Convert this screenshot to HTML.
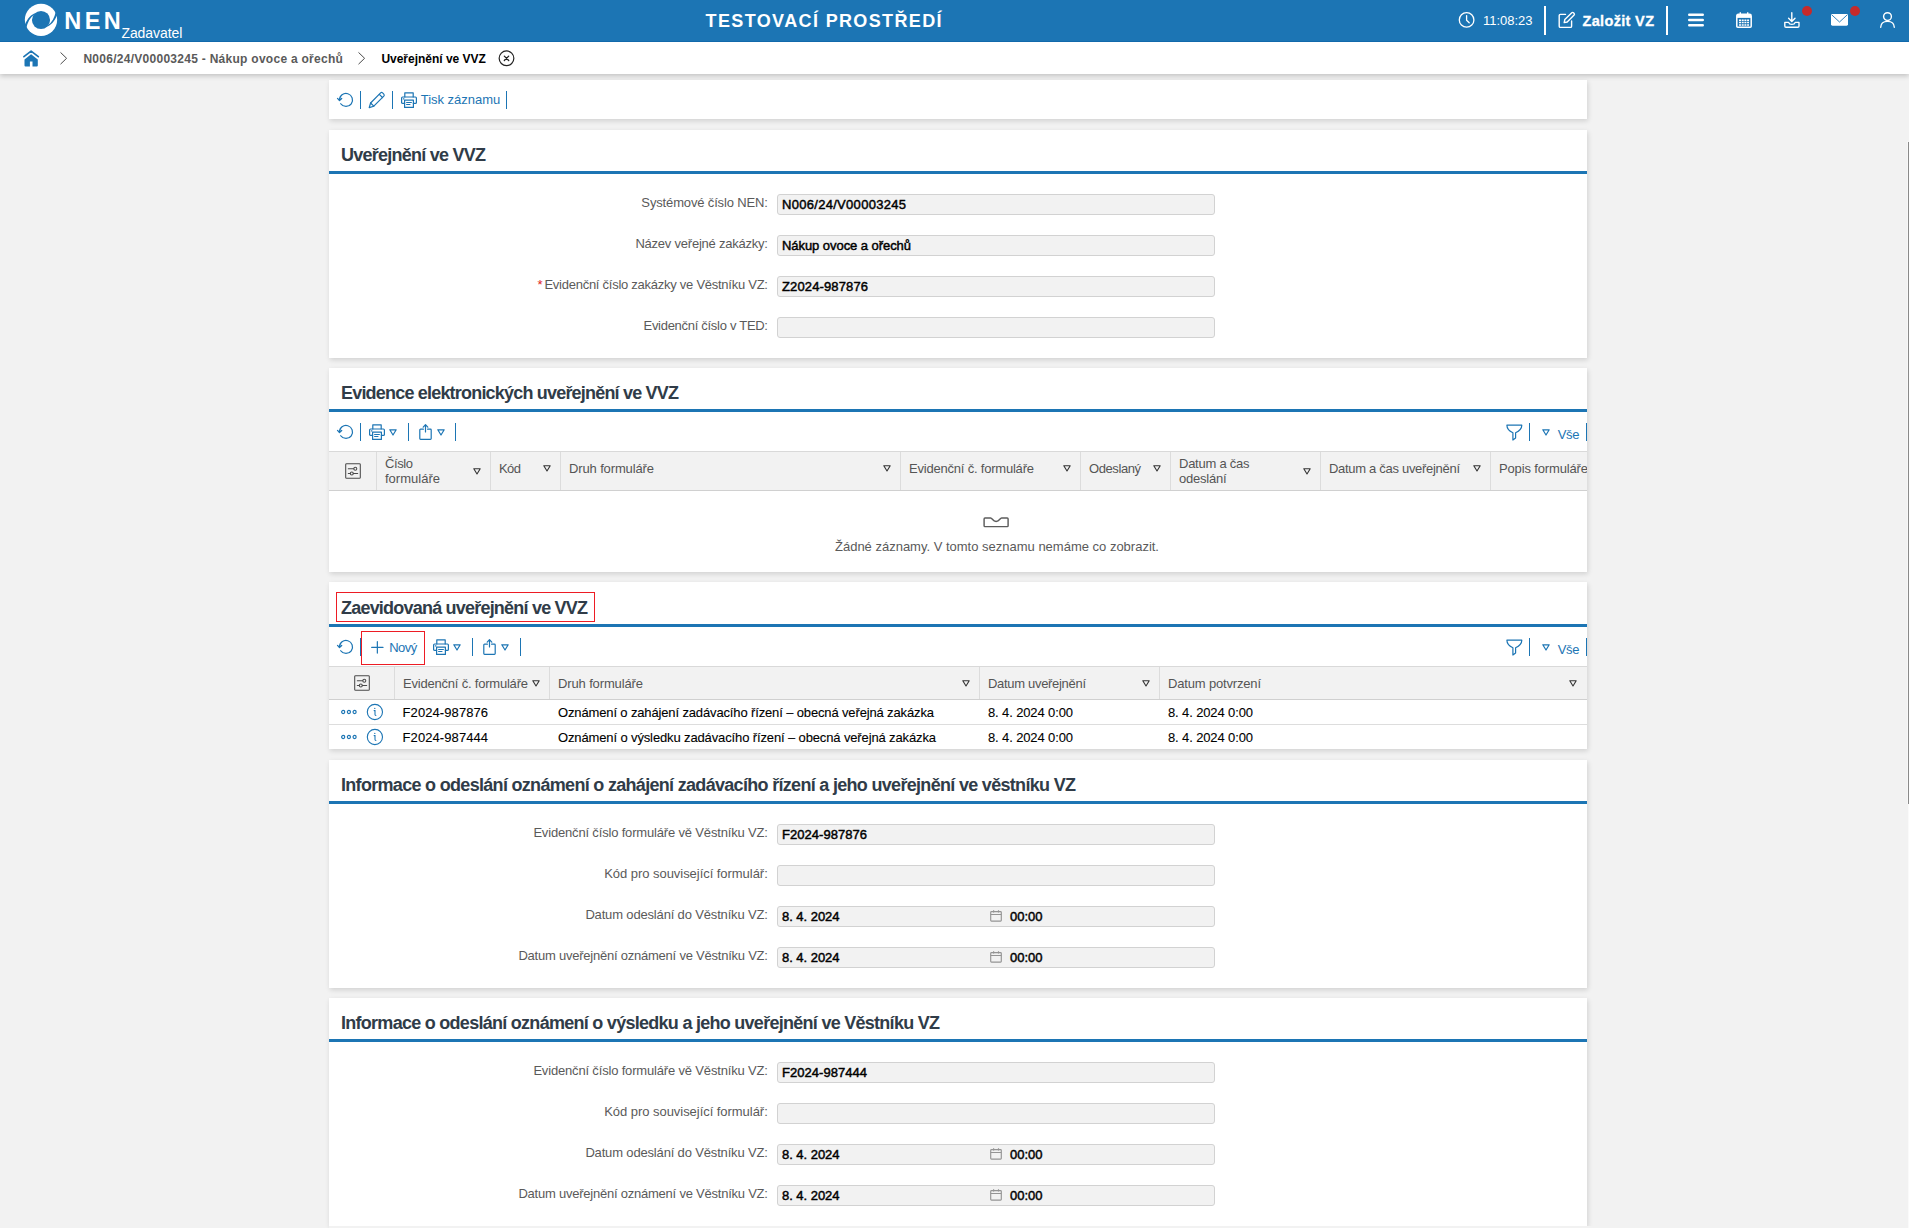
<!DOCTYPE html>
<html lang="cs"><head><meta charset="utf-8"><title>NEN - Uveřejnění ve VVZ</title>
<style>
*{box-sizing:border-box;margin:0;padding:0}
html,body{width:1909px;height:1228px;overflow:hidden;background:#f2f2f2}
body{position:relative;font-family:"Liberation Sans",sans-serif;font-size:13px;color:#000}
.a{position:absolute;white-space:nowrap;line-height:1}
svg{position:absolute;overflow:visible}
#hdr{position:absolute;left:0;top:0;width:1909px;height:41.5px;background:#1c75b4;color:#fff;z-index:2;box-shadow:inset 0 -1px 0 #1169ab}
#bc{position:absolute;left:0;top:41.5px;width:1909px;height:32.5px;background:#fff;box-shadow:0 2px 5px rgba(0,0,0,.2)}
.card{position:absolute;left:329px;width:1258px;background:#fff;box-shadow:1px 2px 5px rgba(0,0,0,.14);overflow:hidden}
.ttl{position:absolute;left:12px;top:15px;font-size:18px;font-weight:bold;color:#303c48;white-space:nowrap;line-height:20px}
.bl{position:absolute;left:0;top:41px;width:100%;height:3px;background:#1c75b4}
.lbl{position:absolute;right:819.3px;color:#5a5a5a;white-space:nowrap;line-height:16px;font-size:13px}
.inp{position:absolute;left:448px;width:438px;height:21px;border:1px solid #d2d2d2;border-radius:3px;background:#f2f2f2}
.val{position:absolute;left:453px;font-weight:normal;-webkit-text-stroke:0.45px #000;white-space:nowrap;line-height:16px;font-size:13px}
.sep{position:absolute;width:1.3px;height:18px;background:#1c75b4}
.blue{color:#1c75b4}
.th{position:absolute;left:0;width:1334px;background:#f2f2f2;border-top:1px solid #d9d9d9;border-bottom:1px solid #d0d0d0}
.vs{position:absolute;top:0;width:1px;height:100%;background:#dcdcdc}
.ht{position:absolute;color:#555;white-space:nowrap;line-height:15px;font-size:13px}
.td{position:absolute;white-space:nowrap;line-height:16px;font-size:13px;color:#000;-webkit-text-stroke:0.1px #000}
</style></head><body>

<div id="hdr">
<svg style="left:0;top:0" width="80" height="42" viewBox="0 0 80 42">
<circle cx="41" cy="19.85" r="16.15" fill="#fff"></circle>
<circle cx="41" cy="20" r="9.05" fill="#1c75b4"></circle>
<path d="M34.3,13.4 C29.6,15.6 26.2,20.4 24.2,26.6 L26.2,28.4 C27.4,22.4 30,17.4 34.6,14.2 Z" fill="#1c75b4"></path>
<path d="M34.3,13.4 C29.6,15.6 26.2,20.4 24.2,26.6 L26.2,28.4 C27.4,22.4 30,17.4 34.6,14.2 Z" fill="#1c75b4" transform="rotate(180 41 19.9)"></path>
</svg>
<span class="a" style="left: 64.3px; top: 9px; font-size: 23.5px; font-weight: bold; line-height: 24px; letter-spacing: 3.438px;">NEN</span>
<span class="a" style="left: 121.4px; top: 25.3px; font-size: 14px; line-height: 16px; letter-spacing: -0.061px;">Zadavatel</span>
<span class="a" style="left: 705.6px; top: 10.7px; font-size: 18px; font-weight: bold; line-height: 20px; letter-spacing: 1.369px;">TESTOVACÍ PROSTŘEDÍ</span>
<svg style="left:1458px;top:11px" width="18" height="18" viewBox="0 0 18 18" fill="none" stroke="#fff" stroke-width="1.3" stroke-linecap="round" stroke-linejoin="round"><circle cx="8.6" cy="8.9" r="7.3"></circle><path d="M8.6,4.6 V9.2 L11.2,11.8"></path></svg>
<span class="a" style="left: 1483px; top: 13px; font-size: 13px; line-height: 16px; letter-spacing: -0.034px;">11:08:23</span>
<div class="a" style="left:1544px;top:6px;width:2px;height:29px;background:#fff"></div>
<svg style="left:1557px;top:11px" width="20" height="18" viewBox="0 0 20 18" fill="none" stroke="#fff" stroke-width="1.4" stroke-linecap="round" stroke-linejoin="round"><path d="M8.5,3.4 H3.4 Q2.2,3.4 2.2,4.6 V15.2 Q2.2,16.4 3.4,16.4 H13.4 Q14.6,16.4 14.6,15.2 V10"></path><path d="M7.2,11.6 L7.8,8.6 L14.8,1.7 Q15.6,1 16.5,1.8 L17.1,2.4 Q17.8,3.2 17.1,4 L10.2,11 Z"></path></svg>
<span class="a" style="left: 1582.5px; top: 12px; font-size: 14.5px; font-weight: bold; line-height: 18px; -webkit-text-stroke: 0.3px rgb(255, 255, 255); letter-spacing: 0.335px;">Založit VZ</span>
<div class="a" style="left:1666px;top:6px;width:2px;height:29px;background:#fff"></div>
<svg style="left:1688px;top:12px" width="16" height="16" viewBox="0 0 16 16" stroke="#fff" stroke-width="2.6" stroke-linecap="round"><path d="M1.3,2.8 H14.7 M1.3,8 H14.7 M1.3,13.3 H14.7"></path></svg>
<svg style="left:1736px;top:12px" width="16" height="16" viewBox="0 0 16 16" fill="none" stroke="#fff"><path d="M0.8,4 Q0.8,2.3 2.4,2.3 H13.6 Q15.2,2.3 15.2,4 V14.2 Q15.2,15.2 14.2,15.2 H1.8 Q0.8,15.2 0.8,14.2 Z" stroke-width="1.5"></path><path d="M1,4.2 H15" stroke-width="3.4"></path><path d="M4.3,0.3 V3.2 M11.7,0.3 V3.2" stroke-width="1.4"></path><path d="M3,8.2 H13 M3,10.6 H13 M3,13 H13" stroke-width="1.5" stroke-dasharray="2 0.7"></path></svg>
<svg style="left:1784px;top:12px" width="16" height="16" viewBox="0 0 16 16" fill="none" stroke="#fff" stroke-width="1.4" stroke-linecap="round" stroke-linejoin="round"><path d="M7.8,0.7 V9.3 M4.6,6.3 L7.8,9.5 L11,6.3"></path><path d="M0.8,10.4 V14 Q0.8,15.2 2,15.2 H13.8 Q15,15.2 15,14 V10.4 H11.2 Q10.6,12.4 7.9,12.4 Q5.2,12.4 4.6,10.4 Z"></path></svg>
<div class="a" style="left:1802px;top:5.8px;width:10px;height:10px;border-radius:50%;background:#c62a2b"></div>
<svg style="left:1831px;top:14px" width="17" height="12" viewBox="0 0 17 12"><rect x="0" y="0" width="17" height="11.7" rx="1.4" fill="#fff"></rect><path d="M0.8,0.9 L8.5,8 L16.2,0.9" fill="none" stroke="#1c75b4" stroke-width="0.9"></path></svg>
<div class="a" style="left:1850px;top:5.8px;width:10px;height:10px;border-radius:50%;background:#c62a2b"></div>
<svg style="left:1880px;top:12px" width="16" height="16" viewBox="0 0 16 16" fill="none" stroke="#fff" stroke-width="1.4" stroke-linecap="round"><circle cx="7.5" cy="4.6" r="3.9"></circle><path d="M0.7,15.3 Q0.9,9.4 7.5,9.4 Q14.1,9.4 14.3,15.3"></path></svg>
</div>
<div id="bc"></div>
<svg style="left:23px;top:49.5px" width="16" height="16" viewBox="0 0 16 16"><path d="M0.9,6.7 L8.1,1.1 L15.3,6.7" fill="none" stroke="#1c75b4" stroke-width="1.7" stroke-linecap="round" stroke-linejoin="round"></path><path d="M8.1,4.3 L14.8,9.5 V15.4 Q14.8,16.4 13.8,16.4 H9.5 V11.4 H6.9 V16.4 H2.5 Q1.5,16.4 1.5,15.4 V9.5 Z" fill="#1c75b4"></path></svg>
<svg style="left:60px;top:52px" width="8" height="13" viewBox="0 0 8 13" fill="none" stroke="#4a4a4a" stroke-width="1" stroke-linecap="round" stroke-linejoin="round"><path d="M0.8,0.7 L6.6,6.3 L0.8,11.9"></path></svg>
<span class="a" style="left: 83.4px; top: 51.8px; font-size: 12px; font-weight: bold; color: rgb(90, 90, 90); line-height: 14px; letter-spacing: 0.274px;">N006/24/V00003245 - Nákup ovoce a ořechů</span>
<svg style="left:358px;top:52px" width="8" height="13" viewBox="0 0 8 13" fill="none" stroke="#4a4a4a" stroke-width="1" stroke-linecap="round" stroke-linejoin="round"><path d="M0.8,0.7 L6.6,6.3 L0.8,11.9"></path></svg>
<span class="a" style="left: 381.4px; top: 51.8px; font-size: 12px; font-weight: bold; color: rgb(0, 0, 0); line-height: 14px; letter-spacing: -0.014px;">Uveřejnění ve VVZ</span>
<svg style="left:498px;top:49.5px" width="17" height="17" viewBox="0 0 17 17" fill="none" stroke="#222" stroke-width="1.2" stroke-linecap="round"><circle cx="8.5" cy="8.3" r="7.35"></circle><path d="M6.3,6.1 L10.7,10.5 M10.7,6.1 L6.3,10.5" stroke-width="1.3"></path></svg>

<div class="card" id="c1" style="top:80px;height:39px">
<svg style="left:7.5px;top:11px" width="18" height="18" viewBox="0 0 18 18" fill="none" stroke="#1c75b4" stroke-width="1.25" stroke-linecap="round" stroke-linejoin="round"><path d="M2.5,9.2 A6.5,6.5 0 1 1 3.7,12.75"></path><path d="M0.5,7.4 L2.5,9.5 L4.7,7.5"></path></svg>
<div class="sep" style="left:30.55px;top:11px"></div>
<svg style="left:39px;top:11px" width="18" height="18" viewBox="0 0 18 18" fill="none" stroke="#1c75b4" stroke-width="1.2" stroke-linejoin="round" stroke-linecap="round"><path d="M1.2,16.6 L2.6,12 L12.6,1.9 Q13.6,1 14.6,1.9 L15.8,3.1 Q16.7,4.1 15.8,5.1 L5.8,15.2 Z"></path><path d="M11.3,3.3 L14.5,6.5 M2.6,12 L5.8,15.2"></path></svg>
<div class="sep" style="left:62.550000000000004px;top:11px"></div>
<svg style="left:72px;top:12px" width="16" height="16" viewBox="0 0 16 16" fill="none" stroke="#1c75b4" stroke-width="1.2" stroke-linejoin="round" stroke-linecap="round"><path d="M3.8,5 V0.8 H12.2 V5"></path><path d="M3.6,11.4 H1.6 Q0.6,11.4 0.6,10.4 V6 Q0.6,5 1.6,5 H14.4 Q15.4,5 15.4,6 V10.4 Q15.4,11.4 14.4,11.4 H12.4"></path><path d="M3.6,8.2 H12.4 V15.4 H3.6 Z"></path><path d="M5.6,10.5 H10.4 M5.6,12.5 H9" stroke-width="1.1"></path><path d="M2.4,6.9 H2.9" stroke-width="1.2"></path></svg>
<span class="a blue" style="left: 91.7px; top: 12px; font-size: 13px; line-height: 16px; letter-spacing: -0.02px;">Tisk záznamu</span>
<div class="sep" style="left:176.95px;top:11px"></div>
</div>
<div class="card" id="c2" style="top:130px;height:228px">
<div class="ttl" style="letter-spacing: -0.755px;">Uveřejnění ve VVZ</div><div class="bl"></div>
<div class="lbl" style="top:65px"><span style="display: inline-block; letter-spacing: -0.149px;">Systémové číslo NEN:</span></div>
<div class="inp" style="top:64px"></div>
<span class="val" style="top: 67px; letter-spacing: 0.295px;">N006/24/V00003245</span>
<div class="lbl" style="top:106px"><span style="display: inline-block; letter-spacing: -0.228px;">Název veřejné zakázky:</span></div>
<div class="inp" style="top:105px"></div>
<span class="val" style="top: 108px; letter-spacing: -0.058px;">Nákup ovoce a ořechů</span>
<div class="lbl" style="top:147px"><span style="color:#d22;margin-right:2px">*</span><span style="display: inline-block; letter-spacing: -0.26px;">Evidenční číslo zakázky ve Věstníku VZ:</span></div>
<div class="inp" style="top:146px"></div>
<span class="val" style="top: 149px; letter-spacing: 0.129px;">Z2024-987876</span>
<div class="lbl" style="top:188px"><span style="display: inline-block; letter-spacing: -0.288px;">Evidenční číslo v TED:</span></div>
<div class="inp" style="top:187px"></div>
</div>
<div class="card" id="c3" style="top:368px;height:204px">
<div class="ttl" style="letter-spacing: -0.804px;">Evidence elektronických uveřejnění ve VVZ</div><div class="bl"></div>
<svg style="left:7.5px;top:55px" width="18" height="18" viewBox="0 0 18 18" fill="none" stroke="#1c75b4" stroke-width="1.25" stroke-linecap="round" stroke-linejoin="round"><path d="M2.5,9.2 A6.5,6.5 0 1 1 3.7,12.75"></path><path d="M0.5,7.4 L2.5,9.5 L4.7,7.5"></path></svg>
<div class="sep" style="left:30.75px;top:55px"></div>
<svg style="left:40px;top:56px" width="16" height="16" viewBox="0 0 16 16" fill="none" stroke="#1c75b4" stroke-width="1.2" stroke-linejoin="round" stroke-linecap="round"><path d="M3.8,5 V0.8 H12.2 V5"></path><path d="M3.6,11.4 H1.6 Q0.6,11.4 0.6,10.4 V6 Q0.6,5 1.6,5 H14.4 Q15.4,5 15.4,6 V10.4 Q15.4,11.4 14.4,11.4 H12.4"></path><path d="M3.6,8.2 H12.4 V15.4 H3.6 Z"></path><path d="M5.6,10.5 H10.4 M5.6,12.5 H9" stroke-width="1.1"></path><path d="M2.4,6.9 H2.9" stroke-width="1.2"></path></svg>
<svg style="left:60.2px;top:60.5px" width="8" height="7" viewBox="0 0 8 7" fill="none" stroke="#1c75b4" stroke-width="1.2" stroke-linejoin="round"><path d="M0.8,0.8 H7.2 L4,6 Z"></path></svg>
<div class="sep" style="left:78.75px;top:55px"></div>
<svg style="left:90px;top:56px" width="14" height="16" viewBox="0 0 14 16" fill="none" stroke="#1c75b4" stroke-width="1.2" stroke-linejoin="round" stroke-linecap="round"><path d="M4.4,5.2 H1.6 Q0.8,5.2 0.8,6 V14.6 Q0.8,15.4 1.6,15.4 H11.4 Q12.2,15.4 12.2,14.6 V6 Q12.2,5.2 11.4,5.2 H8.6"></path><path d="M6.5,0.8 V8 M4.2,3.2 L6.5,0.7 L8.8,3.2"></path></svg>
<svg style="left:108px;top:60.5px" width="8" height="7" viewBox="0 0 8 7" fill="none" stroke="#1c75b4" stroke-width="1.2" stroke-linejoin="round"><path d="M0.8,0.8 H7.2 L4,6 Z"></path></svg>
<div class="sep" style="left:125.94999999999999px;top:55px"></div>
<svg style="left:1176.5px;top:55.5px" width="16" height="17" viewBox="0 0 16 17" fill="none" stroke="#1c75b4" stroke-width="1.2" stroke-linejoin="round" stroke-linecap="round"><path d="M0.9,1.2 H15.8 C15.8,5.2 12.4,7.4 9.6,8.8 V14 L6.9,16 V8.8 C4.1,7.4 0.9,5.2 0.9,1.2 Z"></path></svg>
<div class="sep" style="left:1200.05px;top:55px"></div>
<svg style="left:1212.8px;top:60.5px" width="8" height="7" viewBox="0 0 8 7" fill="none" stroke="#1c75b4" stroke-width="1.2" stroke-linejoin="round"><path d="M0.8,0.8 H7.2 L4,6 Z"></path></svg>
<span class="a blue" style="left: 1228.7px; top: 59px; font-size: 13px; line-height: 16px; letter-spacing: -0.303px;">Vše</span>
<div class="sep" style="left:1256.75px;top:55px"></div>
<div class="th" style="top:83px;height:40px;width:1334px">
<div class="vs" style="left:47px"></div>
<span class="ht" style="left: 56px; top: 4px; letter-spacing: -0.406px;">Číslo</span>
<span class="ht" style="left: 56px; top: 19px; letter-spacing: 0.01px;">formuláře</span>
<svg style="left:144px;top:15.7px" width="8" height="7" viewBox="0 0 8 7" fill="none" stroke="#333" stroke-width="1.1" stroke-linejoin="round"><path d="M0.8,0.8 H7.2 L4,6 Z"></path></svg>
<div class="vs" style="left:161px"></div>
<span class="ht" style="left: 170px; top: 8.5px; letter-spacing: -0.57px;">Kód</span>
<svg style="left:214px;top:12.5px" width="8" height="7" viewBox="0 0 8 7" fill="none" stroke="#333" stroke-width="1.1" stroke-linejoin="round"><path d="M0.8,0.8 H7.2 L4,6 Z"></path></svg>
<div class="vs" style="left:231px"></div>
<span class="ht" style="left: 240px; top: 8.5px; letter-spacing: -0.131px;">Druh formuláře</span>
<svg style="left:554px;top:12.5px" width="8" height="7" viewBox="0 0 8 7" fill="none" stroke="#333" stroke-width="1.1" stroke-linejoin="round"><path d="M0.8,0.8 H7.2 L4,6 Z"></path></svg>
<div class="vs" style="left:571px"></div>
<span class="ht" style="left: 580px; top: 8.5px; letter-spacing: -0.207px;">Evidenční č. formuláře</span>
<svg style="left:734px;top:12.5px" width="8" height="7" viewBox="0 0 8 7" fill="none" stroke="#333" stroke-width="1.1" stroke-linejoin="round"><path d="M0.8,0.8 H7.2 L4,6 Z"></path></svg>
<div class="vs" style="left:751px"></div>
<span class="ht" style="left: 760px; top: 8.5px; letter-spacing: -0.417px;">Odeslaný</span>
<svg style="left:824px;top:12.5px" width="8" height="7" viewBox="0 0 8 7" fill="none" stroke="#333" stroke-width="1.1" stroke-linejoin="round"><path d="M0.8,0.8 H7.2 L4,6 Z"></path></svg>
<div class="vs" style="left:841px"></div>
<span class="ht" style="left: 850px; top: 4px; letter-spacing: -0.248px;">Datum a čas</span>
<span class="ht" style="left: 850px; top: 19px; letter-spacing: -0.237px;">odeslání</span>
<svg style="left:974.3px;top:15.7px" width="8" height="7" viewBox="0 0 8 7" fill="none" stroke="#333" stroke-width="1.1" stroke-linejoin="round"><path d="M0.8,0.8 H7.2 L4,6 Z"></path></svg>
<div class="vs" style="left:991px"></div>
<span class="ht" style="left: 1000px; top: 8.5px; letter-spacing: -0.3px;">Datum a čas uveřejnění</span>
<svg style="left:1144px;top:12.5px" width="8" height="7" viewBox="0 0 8 7" fill="none" stroke="#333" stroke-width="1.1" stroke-linejoin="round"><path d="M0.8,0.8 H7.2 L4,6 Z"></path></svg>
<div class="vs" style="left:1161px"></div>
<span class="ht" style="left: 1170px; top: 8.5px; letter-spacing: -0.146px;">Popis formuláře</span>
</div>
<svg style="left:16px;top:95px" width="16" height="16" viewBox="0 0 16 16" fill="none" stroke="#4a4a4a" stroke-width="1.05" stroke-linecap="round"><rect x="0.7" y="0.7" width="14.6" height="14.6" rx="0.9"></rect><path d="M3.3,5.7 H8.7 M3.3,10.4 H5.3 M8.3,10.4 H12.7"></path><circle cx="10.3" cy="5.7" r="1.5"></circle><circle cx="6.8" cy="10.4" r="1.5"></circle></svg>
<svg style="left:654px;top:147.7px" width="26" height="12" viewBox="0 0 26 12" fill="none" stroke="#5c5c5c" stroke-width="1.45" stroke-linejoin="round"><path d="M2,2 H7.6 C9.4,2 9.6,5.4 13.1,5.4 C16.6,5.4 16.8,2 18.6,2 H24.2 Q25.1,2 25.1,2.9 V9.7 Q25.1,10.6 24.2,10.6 H2 Q1.1,10.6 1.1,9.7 V2.9 Q1.1,2 2,2 Z"></path></svg>
<span class="a" style="left: 506px; top: 171px; color: rgb(90, 90, 90); font-size: 13px; line-height: 16px; letter-spacing: -0.004px;">Žádné záznamy. V tomto seznamu nemáme co zobrazit.</span>
</div>
<div class="card" id="c4" style="top:582px;height:167px">
<div class="ttl" style="top: 16px; letter-spacing: -0.79px;">Zaevidovaná uveřejnění ve VVZ</div>
<div class="a" style="left:7px;top:10px;width:259px;height:30px;border:1px solid #ed1c24"></div>
<div class="bl" style="top:42px"></div>
<svg style="left:7.5px;top:56px" width="18" height="18" viewBox="0 0 18 18" fill="none" stroke="#1c75b4" stroke-width="1.25" stroke-linecap="round" stroke-linejoin="round"><path d="M2.5,9.2 A6.5,6.5 0 1 1 3.7,12.75"></path><path d="M0.5,7.4 L2.5,9.5 L4.7,7.5"></path></svg>
<div class="sep" style="left:30.55px;top:56px"></div>
<div class="a" style="left:32px;top:49px;width:64px;height:34px;border:1px solid #ed1c24;background:#fff"></div>
<svg style="left:41.5px;top:58.5px" width="13" height="13" viewBox="0 0 13 13" fill="none" stroke="#1c75b4" stroke-width="1.2" stroke-linecap="round"><path d="M0.7,6.4 H12 M6.35,0.7 V12.1"></path></svg>
<span class="a blue" style="left: 60.2px; top: 58px; font-size: 13px; line-height: 16px; letter-spacing: -0.542px;">Nový</span>
<svg style="left:104px;top:57px" width="16" height="16" viewBox="0 0 16 16" fill="none" stroke="#1c75b4" stroke-width="1.2" stroke-linejoin="round" stroke-linecap="round"><path d="M3.8,5 V0.8 H12.2 V5"></path><path d="M3.6,11.4 H1.6 Q0.6,11.4 0.6,10.4 V6 Q0.6,5 1.6,5 H14.4 Q15.4,5 15.4,6 V10.4 Q15.4,11.4 14.4,11.4 H12.4"></path><path d="M3.6,8.2 H12.4 V15.4 H3.6 Z"></path><path d="M5.6,10.5 H10.4 M5.6,12.5 H9" stroke-width="1.1"></path><path d="M2.4,6.9 H2.9" stroke-width="1.2"></path></svg>
<svg style="left:124px;top:61.5px" width="8" height="7" viewBox="0 0 8 7" fill="none" stroke="#1c75b4" stroke-width="1.2" stroke-linejoin="round"><path d="M0.8,0.8 H7.2 L4,6 Z"></path></svg>
<div class="sep" style="left:142.85px;top:56px"></div>
<svg style="left:154px;top:57px" width="14" height="16" viewBox="0 0 14 16" fill="none" stroke="#1c75b4" stroke-width="1.2" stroke-linejoin="round" stroke-linecap="round"><path d="M4.4,5.2 H1.6 Q0.8,5.2 0.8,6 V14.6 Q0.8,15.4 1.6,15.4 H11.4 Q12.2,15.4 12.2,14.6 V6 Q12.2,5.2 11.4,5.2 H8.6"></path><path d="M6.5,0.8 V8 M4.2,3.2 L6.5,0.7 L8.8,3.2"></path></svg>
<svg style="left:172px;top:61.5px" width="8" height="7" viewBox="0 0 8 7" fill="none" stroke="#1c75b4" stroke-width="1.2" stroke-linejoin="round"><path d="M0.8,0.8 H7.2 L4,6 Z"></path></svg>
<div class="sep" style="left:190.85px;top:56px"></div>
<svg style="left:1176.5px;top:56.5px" width="16" height="17" viewBox="0 0 16 17" fill="none" stroke="#1c75b4" stroke-width="1.2" stroke-linejoin="round" stroke-linecap="round"><path d="M0.9,1.2 H15.8 C15.8,5.2 12.4,7.4 9.6,8.8 V14 L6.9,16 V8.8 C4.1,7.4 0.9,5.2 0.9,1.2 Z"></path></svg>
<div class="sep" style="left:1200.05px;top:56px"></div>
<svg style="left:1212.8px;top:61.5px" width="8" height="7" viewBox="0 0 8 7" fill="none" stroke="#1c75b4" stroke-width="1.2" stroke-linejoin="round"><path d="M0.8,0.8 H7.2 L4,6 Z"></path></svg>
<span class="a blue" style="left: 1228.7px; top: 60px; font-size: 13px; line-height: 16px; letter-spacing: -0.303px;">Vše</span>
<div class="sep" style="left:1256.75px;top:56px"></div>
<div class="th" style="top:84px;height:34px;width:1258px">
<div class="vs" style="left:65px"></div>
<span class="ht" style="left: 74px; top: 8.5px; letter-spacing: -0.207px;">Evidenční č. formuláře</span>
<svg style="left:203px;top:12.5px" width="8" height="7" viewBox="0 0 8 7" fill="none" stroke="#333" stroke-width="1.1" stroke-linejoin="round"><path d="M0.8,0.8 H7.2 L4,6 Z"></path></svg>
<div class="vs" style="left:220px"></div>
<span class="ht" style="left: 229px; top: 8.5px; letter-spacing: -0.131px;">Druh formuláře</span>
<svg style="left:633px;top:12.5px" width="8" height="7" viewBox="0 0 8 7" fill="none" stroke="#333" stroke-width="1.1" stroke-linejoin="round"><path d="M0.8,0.8 H7.2 L4,6 Z"></path></svg>
<div class="vs" style="left:650px"></div>
<span class="ht" style="left: 659px; top: 8.5px; letter-spacing: -0.308px;">Datum uveřejnění</span>
<svg style="left:812.5px;top:12.5px" width="8" height="7" viewBox="0 0 8 7" fill="none" stroke="#333" stroke-width="1.1" stroke-linejoin="round"><path d="M0.8,0.8 H7.2 L4,6 Z"></path></svg>
<div class="vs" style="left:830px"></div>
<span class="ht" style="left: 839px; top: 8.5px; letter-spacing: -0.17px;">Datum potvrzení</span>
<svg style="left:1240px;top:12.5px" width="8" height="7" viewBox="0 0 8 7" fill="none" stroke="#333" stroke-width="1.1" stroke-linejoin="round"><path d="M0.8,0.8 H7.2 L4,6 Z"></path></svg>
</div>
<svg style="left:25px;top:93px" width="16" height="16" viewBox="0 0 16 16" fill="none" stroke="#4a4a4a" stroke-width="1.05" stroke-linecap="round"><rect x="0.7" y="0.7" width="14.6" height="14.6" rx="0.9"></rect><path d="M3.3,5.7 H8.7 M3.3,10.4 H5.3 M8.3,10.4 H12.7"></path><circle cx="10.3" cy="5.7" r="1.5"></circle><circle cx="6.8" cy="10.4" r="1.5"></circle></svg>
<svg style="left:11px;top:127px" width="18" height="6" viewBox="0 0 18 6" fill="none" stroke="#1c75b4" stroke-width="1.2"><circle cx="3.2" cy="3" r="1.55"></circle><circle cx="8.9" cy="3" r="1.55"></circle><circle cx="14.6" cy="3" r="1.55"></circle></svg>
<svg style="left:37px;top:121px" width="18" height="18" viewBox="0 0 18 18" fill="none" stroke="#1c75b4" stroke-width="1.1" stroke-linecap="round"><circle cx="8.9" cy="9" r="7.6"></circle><path d="M8.1,7.6 H9 V11.6 Q9,12.4 9.9,12.4" stroke-width="1.05"></path><circle cx="8.8" cy="5.4" r="0.65" fill="#1c75b4" stroke="none"></circle></svg>
<span class="td" style="left: 73.6px; top: 122.8px; letter-spacing: 0.084px;">F2024-987876</span>
<span class="td" style="left: 229px; top: 122.8px; letter-spacing: -0.139px;">Oznámení o zahájení zadávacího řízení – obecná veřejná zakázka</span>
<span class="td" style="left: 659px; top: 122.8px; letter-spacing: -0.125px;">8. 4. 2024 0:00</span>
<span class="td" style="left: 839px; top: 122.8px; letter-spacing: -0.125px;">8. 4. 2024 0:00</span>
<div class="a" style="left:0;top:142px;width:1258px;height:1px;background:#ddd"></div>
<svg style="left:11px;top:152px" width="18" height="6" viewBox="0 0 18 6" fill="none" stroke="#1c75b4" stroke-width="1.2"><circle cx="3.2" cy="3" r="1.55"></circle><circle cx="8.9" cy="3" r="1.55"></circle><circle cx="14.6" cy="3" r="1.55"></circle></svg>
<svg style="left:37px;top:146px" width="18" height="18" viewBox="0 0 18 18" fill="none" stroke="#1c75b4" stroke-width="1.1" stroke-linecap="round"><circle cx="8.9" cy="9" r="7.6"></circle><path d="M8.1,7.6 H9 V11.6 Q9,12.4 9.9,12.4" stroke-width="1.05"></path><circle cx="8.8" cy="5.4" r="0.65" fill="#1c75b4" stroke="none"></circle></svg>
<span class="td" style="left: 73.6px; top: 147.8px; letter-spacing: 0.084px;">F2024-987444</span>
<span class="td" style="left: 229px; top: 147.8px; letter-spacing: -0.129px;">Oznámení o výsledku zadávacího řízení – obecná veřejná zakázka</span>
<span class="td" style="left: 659px; top: 147.8px; letter-spacing: -0.125px;">8. 4. 2024 0:00</span>
<span class="td" style="left: 839px; top: 147.8px; letter-spacing: -0.125px;">8. 4. 2024 0:00</span>
</div>
<div class="card" id="c5" style="top:760px;height:228px">
<div class="ttl" style="letter-spacing: -0.692px;">Informace o odeslání oznámení o zahájení zadávacího řízení a jeho uveřejnění ve věstníku VZ</div><div class="bl"></div>
<div class="lbl" style="top:65px"><span style="display: inline-block; letter-spacing: -0.171px;">Evidenční číslo formuláře vě Věstníku VZ:</span></div>
<div class="inp" style="top:64px"></div>
<span class="val" style="top: 67px; letter-spacing: 0.038px;">F2024-987876</span>
<div class="lbl" style="top:106px"><span style="display: inline-block; letter-spacing: -0.044px;">Kód pro související formulář:</span></div>
<div class="inp" style="top:105px"></div>
<div class="lbl" style="top:147px"><span style="display: inline-block; letter-spacing: -0.161px;">Datum odeslání do Věstníku VZ:</span></div>
<div class="inp" style="top:146px"></div>
<span class="val" style="top: 149px; letter-spacing: -0.036px;">8. 4. 2024</span>
<svg style="left:661px;top:150.0px" width="13" height="13" viewBox="0 0 13 13" fill="none" stroke="#949494" stroke-width="1.15" stroke-linejoin="round"><rect x="0.7" y="1.6" width="10.6" height="9.5" rx="0.8"></rect><path d="M0.7,4.5 H11.3 M3.6,0.2 V2.6 M8.5,0.2 V2.6"></path></svg>
<span class="val" style="left: 681px; top: 149px; letter-spacing: -0.012px;">00:00</span>
<div class="lbl" style="top:188px"><span style="display: inline-block; letter-spacing: -0.23px;">Datum uveřejnění oznámení ve Věstníku VZ:</span></div>
<div class="inp" style="top:187px"></div>
<span class="val" style="top: 190px; letter-spacing: -0.036px;">8. 4. 2024</span>
<svg style="left:661px;top:191.0px" width="13" height="13" viewBox="0 0 13 13" fill="none" stroke="#949494" stroke-width="1.15" stroke-linejoin="round"><rect x="0.7" y="1.6" width="10.6" height="9.5" rx="0.8"></rect><path d="M0.7,4.5 H11.3 M3.6,0.2 V2.6 M8.5,0.2 V2.6"></path></svg>
<span class="val" style="left: 681px; top: 190px; letter-spacing: -0.012px;">00:00</span>
</div>
<div class="card" id="c6" style="top:998px;height:228px">
<div class="ttl" style="letter-spacing: -0.725px;">Informace o odeslání oznámení o výsledku a jeho uveřejnění ve Věstníku VZ</div><div class="bl"></div>
<div class="lbl" style="top:65px"><span style="display: inline-block; letter-spacing: -0.171px;">Evidenční číslo formuláře vě Věstníku VZ:</span></div>
<div class="inp" style="top:64px"></div>
<span class="val" style="top: 67px; letter-spacing: 0.038px;">F2024-987444</span>
<div class="lbl" style="top:106px"><span style="display: inline-block; letter-spacing: -0.044px;">Kód pro související formulář:</span></div>
<div class="inp" style="top:105px"></div>
<div class="lbl" style="top:147px"><span style="display: inline-block; letter-spacing: -0.161px;">Datum odeslání do Věstníku VZ:</span></div>
<div class="inp" style="top:146px"></div>
<span class="val" style="top: 149px; letter-spacing: -0.036px;">8. 4. 2024</span>
<svg style="left:661px;top:150.0px" width="13" height="13" viewBox="0 0 13 13" fill="none" stroke="#949494" stroke-width="1.15" stroke-linejoin="round"><rect x="0.7" y="1.6" width="10.6" height="9.5" rx="0.8"></rect><path d="M0.7,4.5 H11.3 M3.6,0.2 V2.6 M8.5,0.2 V2.6"></path></svg>
<span class="val" style="left: 681px; top: 149px; letter-spacing: -0.012px;">00:00</span>
<div class="lbl" style="top:188px"><span style="display: inline-block; letter-spacing: -0.23px;">Datum uveřejnění oznámení ve Věstníku VZ:</span></div>
<div class="inp" style="top:187px"></div>
<span class="val" style="top: 190px; letter-spacing: -0.036px;">8. 4. 2024</span>
<svg style="left:661px;top:191.0px" width="13" height="13" viewBox="0 0 13 13" fill="none" stroke="#949494" stroke-width="1.15" stroke-linejoin="round"><rect x="0.7" y="1.6" width="10.6" height="9.5" rx="0.8"></rect><path d="M0.7,4.5 H11.3 M3.6,0.2 V2.6 M8.5,0.2 V2.6"></path></svg>
<span class="val" style="left: 681px; top: 190px; letter-spacing: -0.012px;">00:00</span>
</div>

<div class="a" style="left:329px;top:1226px;width:1270px;height:2px;background:#f2f2f2"></div>
<div class="a" style="left:1907px;top:141px;width:1px;height:663px;background:#f8f8f8"></div>
<div class="a" style="left:1908px;top:142px;width:1px;height:662px;background:#8a8a8a"></div>
<div class="a" style="left:1908px;top:804px;width:1px;height:424px;background:#fafafa"></div>

</body></html>
